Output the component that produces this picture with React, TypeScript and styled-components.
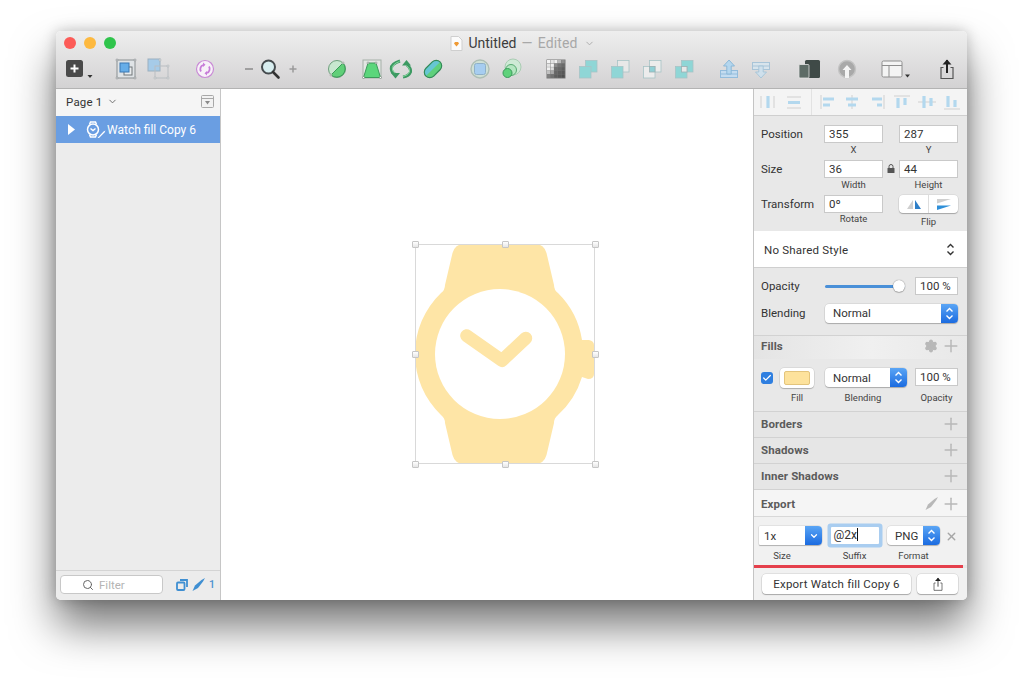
import React from 'react';
import styled, { createGlobalStyle } from 'styled-components';
import { Search, ChevronDown, Plus, X, Check, Settings } from 'lucide-react';

const GlobalStyle = createGlobalStyle`
  html, body { margin: 0; padding: 0; background: #fff; }
  body { font-family: Roboto, "Liberation Sans", sans-serif; font-size: 12px; color: #333; }
`;

const Page = styled.div`
  width: 1023px;
  height: 680px;
  padding: 31px 56px 0;
  box-sizing: border-box;
  overflow: hidden;
`;

const Window = styled.div`
  width: 911px;
  height: 569px;
  display: flex;
  flex-direction: column;
  border-radius: 5px;
  overflow: hidden;
`;

const Shadow = styled.div`
  border-radius: 5px;
  width: 911px;
  box-shadow: 0 26px 44px rgba(0, 0, 0, 0.54), 0 0 14px rgba(0, 0, 0, 0.22);
`;

const TitleArea = styled.div`
  height: 58px;
  flex: none;
  box-sizing: border-box;
  background: linear-gradient(#eeeeee, #d3d2d3);
  border-bottom: 1px solid #b3b3b3;
`;

const TitleBar = styled.div`
  display: grid;
  grid-template-columns: 1fr auto 1fr;
  align-items: center;
  height: 24px;
  padding-left: 8px;
`;

const Lights = styled.div`
  display: flex;
  gap: 8px;
`;

const Light = styled.span<{ $color: string }>`
  width: 12px;
  height: 12px;
  border-radius: 50%;
  background: ${(p) => p.$color};
`;

const Title = styled.div`
  display: flex;
  align-items: center;
  gap: 5px;
  padding-left: 14px;
  font-size: 14px;
  word-spacing: 1.5px;
  color: #3c3c3c;
`;

const Edited = styled.span`
  color: #a8a8a8;
  letter-spacing: 0.15px;
`;

const TitleChevron = styled.span`
  display: flex;
  margin-left: 1px;
`;

const Toolbar = styled.div`
  display: flex;
  align-items: center;
  height: 28px;
  padding-left: 10px;
`;

const Tool = styled.div<{ $gap: number }>`
  display: flex;
  flex: none;
  margin-left: ${(p) => p.$gap}px;
`;

const Body = styled.div`
  flex: 1;
  display: flex;
  min-height: 0;
`;

const Sidebar = styled.aside`
  width: 165px;
  flex: none;
  box-sizing: border-box;
  display: flex;
  flex-direction: column;
  background: #ececec;
  border-right: 1px solid #c6c6c6;
`;

const PageHeader = styled.div`
  height: 27px;
  box-sizing: border-box;
  display: flex;
  align-items: center;
  padding: 0 6px 2px 10px;
  background: #f5f5f5;
  color: #333;
  font-size: 11.5px;
  letter-spacing: 0.2px;
  gap: 4px;
`;

const Spacer = styled.div`
  flex: 1;
`;

const LayerRow = styled.div`
  height: 27px;
  display: flex;
  align-items: center;
  padding-left: 11px;
  background: #6a9ee2;
  color: #fff;
  font-size: 12px;
`;

const LayerArrow = styled.span`
  display: flex;
  margin-right: 9px;
`;

const LayerName = styled.span`
  margin-left: 1px;
`;

const SideFooter = styled.div`
  margin-top: auto;
  height: 30px;
  box-sizing: border-box;
  display: flex;
  align-items: center;
  padding: 0 5px 2px 4px;
  border-top: 1px solid #d4d4d4;
`;

const FilterBox = styled.div`
  width: 103px;
  height: 19px;
  box-sizing: border-box;
  border: 1px solid #c8c8c8;
  border-radius: 4px;
  background: #fff;
  display: flex;
  align-items: center;
  padding-left: 21px;
  gap: 5px;
  font-size: 11.5px;
  color: #b4b4b4;
`;

const Counter = styled.div`
  margin-left: 13px;
  display: flex;
  align-items: center;
  gap: 4px;
  color: #4a90d0;
  font-size: 10.5px;
  font-weight: 500;
`;

const Canvas = styled.main`
  flex: 1;
  position: relative;
  background: #fff;
`;

const Selection = styled.div`
  position: absolute;
  left: 194px;
  top: 155px;
  width: 180px;
  height: 220px;
  box-sizing: border-box;
`;

const Outline = styled.div`
  position: absolute;
  inset: 0;
  border: 1px solid #d9d9d9;
`;

const Handle = styled.span<{ $x: number; $y: number }>`
  position: absolute;
  left: ${(p) => p.$x}%;
  top: ${(p) => p.$y}%;
  width: 7px;
  height: 7px;
  margin: -3.5px 0 0 -3.5px;
  border: 1px solid #c6c6c6;
  border-radius: 1px;
  background: linear-gradient(#fff, #e6e6e6);
  box-sizing: border-box;
`;

const Inspector = styled.aside`
  width: 214px;
  flex: none;
  box-sizing: border-box;
  background: #e8e8e8;
  border-left: 1px solid #c4c4c4;
  display: flex;
  flex-direction: column;
  font-size: 11.5px;
`;

const AlignBar = styled.div`
  height: 27px;
  flex: none;
  box-sizing: border-box;
  display: flex;
  align-items: center;
  background: #f4f4f4;
  border-bottom: 1px solid #cfcfcf;
`;

const AlignDivider = styled.span`
  width: 1px;
  height: 26px;
  background: #e2e2e2;
  margin-left: 7px;
`;

const AlignSlot = styled.span<{ $gap: number }>`
  display: flex;
  margin-left: ${(p) => p.$gap}px;
`;

const GeometryGrid = styled.div`
  height: 115px;
  flex: none;
  box-sizing: border-box;
  padding: 9px 9px 0 7px;
  display: grid;
  grid-template-columns: 63px 59px 75px;
  grid-auto-rows: 35px;
  justify-content: start;
`;

const GeoLabel = styled.div`
  height: 18px;
  line-height: 18px;
  color: #333;
`;

const FieldStack = styled.div<{ $second?: boolean }>`
  display: flex;
  flex-direction: column;
  align-items: center;
  margin-left: ${(p) => (p.$second ? 16 : 0)}px;
  width: 59px;
`;

const Field = styled.div<{ $width?: number }>`
  width: ${(p) => p.$width ?? 59}px;
  height: 18px;
  box-sizing: border-box;
  background: #fff;
  border: 1px solid #c9c9c9;
  padding-left: 4px;
  line-height: 16px;
  color: #333;
  font-size: 11.5px;
  flex: none;
`;

const Caption = styled.div<{ $gap?: number; $inset?: number }>`
  font-size: 9.5px;
  color: #444;
  line-height: 12px;
  margin-top: ${(p) => p.$gap ?? 1}px;
  padding-right: ${(p) => p.$inset ?? 0}px;
  text-align: center;
`;

const SizeLock = styled.div`
  position: relative;
`;

const LockBadge = styled.span`
  position: absolute;
  left: -12px;
  top: 4px;
  display: flex;
`;

const FlipControl = styled.div`
  width: 59px;
  height: 18px;
  display: flex;
  background: #fff;
  border-radius: 4px;
  box-shadow: 0 1px 1px rgba(0, 0, 0, 0.25), 0 0 0 0.5px rgba(0, 0, 0, 0.1);
`;

const FlipHalf = styled.div<{ $divide?: boolean }>`
  flex: 1;
  display: flex;
  align-items: center;
  justify-content: center;
  border-left: ${(p) => (p.$divide ? '1px solid #dddddd' : 'none')};
`;

const SharedStyle = styled.div`
  height: 37px;
  flex: none;
  box-sizing: border-box;
  background: #fff;
  display: flex;
  align-items: center;
  justify-content: space-between;
  padding: 1px 12px 0 10px;
  letter-spacing: 0.2px;
  border-bottom: 1px solid #cfcfcf;
`;

const Appearance = styled.div`
  height: 67px;
  flex: none;
  box-sizing: border-box;
  padding: 9px 9px 0 7px;
  display: flex;
  flex-direction: column;
  gap: 9px;
`;

const PropRow = styled.div`
  display: flex;
  align-items: center;
  height: 18px;
`;

const PropLabel = styled.div`
  width: 64px;
  color: #333;
`;

const SliderTrack = styled.div`
  width: 80px;
  height: 3px;
  border-radius: 2px;
  background: #4a90d8;
  position: relative;
  margin-right: 10px;
`;

const SliderKnob = styled.span`
  position: absolute;
  right: 0;
  top: -4.5px;
  width: 12px;
  height: 12px;
  border-radius: 50%;
  background: #fff;
  box-shadow: 0 0 1px rgba(0, 0, 0, 0.6), 0 1px 1px rgba(0, 0, 0, 0.2);
`;

const Select = styled.div<{ $width: number; $flat?: boolean }>`
  width: ${(p) => p.$width}px;
  height: 19px;
  flex: none;
  display: flex;
  align-items: center;
  justify-content: space-between;
  background: #fff;
  border-radius: ${(p) => (p.$flat ? '1px 4px 4px 1px' : '4px')};
  box-shadow: 0 1px 1px rgba(0, 0, 0, 0.22), 0 0 0 0.5px rgba(0, 0, 0, 0.12);
  padding-left: ${(p) => (p.$flat ? 5 : 8)}px;
  box-sizing: border-box;
  overflow: hidden;
  color: #333;
  font-size: 11.5px;
`;

const Stepper = styled.span`
  width: 17px;
  height: 100%;
  display: flex;
  align-items: center;
  justify-content: center;
  background: linear-gradient(#5aa5f5, #1b6be0);
`;

const SectionHeader = styled.div<{ $light?: boolean; $height?: number }>`
  height: ${(p) => p.$height ?? 26}px;
  flex: none;
  box-sizing: border-box;
  display: flex;
  align-items: center;
  padding: ${(p) => (p.$light ? '1px 6px 0 7px' : '0 6px 2px 7px')};
  background: ${(p) =>
    p.$light ? '#f5f5f5' : 'linear-gradient(90deg, #e4e4e4, #f0f0f0 55%, #e8e8e8)'};
  border-top: 1px solid #d2d2d2;
  border-bottom: 1px solid ${(p) => (p.$light ? '#d8d8d8' : 'transparent')};
  font-weight: 700;
  color: #5b5b5b;
  font-size: 11.5px;
  letter-spacing: 0.1px;
`;

const PlainHeader = styled(SectionHeader)`
  background: #e6e6e6;
  padding: 0 6px 0 7px;
`;

const HeaderIcons = styled.div`
  margin-left: auto;
  display: flex;
  align-items: center;
  gap: 3px;
  color: #b8b8b8;
`;

const FillRow = styled.div`
  height: 52px;
  flex: none;
  box-sizing: border-box;
  padding: 9px 9px 0 7px;
  display: flex;
  align-items: flex-start;
`;

const ControlStack = styled.div<{ $width: number; $gap?: number }>`
  width: ${(p) => p.$width}px;
  height: 36px;
  margin-left: ${(p) => p.$gap ?? 0}px;
  flex: none;
  display: flex;
  flex-direction: column;
  align-items: center;
  justify-content: space-between;
`;

const CheckBox = styled.span`
  width: 12px;
  height: 12px;
  margin-top: 4px;
  flex: none;
  display: flex;
  align-items: center;
  justify-content: center;
  background: #2f7fe0;
  border-radius: 3px;
  color: #fff;
`;

const Swatch = styled.div`
  width: 34px;
  height: 20px;
  box-sizing: border-box;
  padding: 3px 4px;
  background: #fff;
  border-radius: 4px;
  box-shadow: 0 1px 1px rgba(0, 0, 0, 0.2), 0 0 0 0.5px rgba(0, 0, 0, 0.12);
`;

const SwatchColor = styled.div`
  height: 100%;
  border-radius: 2px;
  background: #fde29c;
  border: 1px solid #e3c47c;
  box-sizing: border-box;
`;

const ExportRow = styled.div`
  height: 48px;
  flex: none;
  box-sizing: border-box;
  padding: 9px 0 0 5px;
  background: #f1f1f1;
  display: flex;
  align-items: flex-start;
`;

const SuffixField = styled.div`
  width: 48px;
  height: 17px;
  margin-top: 1px;
  box-sizing: border-box;
  background: #fff;
  box-shadow: 0 0 0 3.5px #a9cdf0;
  border-radius: 1px;
  padding-left: 3px;
  line-height: 17px;
  font-size: 12px;
  color: #333;
`;

const Caret = styled.span`
  display: inline-block;
  width: 1px;
  height: 13px;
  background: #111;
  vertical-align: -2px;
`;

const RemoveIcon = styled.div`
  margin: 4px 0 0 5px;
  color: #a6a6a6;
  display: flex;
`;

const RedLine = styled.div`
  height: 3px;
  flex: none;
  margin-right: 4px;
  background: #e5404c;
`;

const ExportFooter = styled.div`
  flex: 1;
  display: flex;
  align-items: flex-start;
  gap: 6px;
  padding: 6px 0 0 8px;
  background: #f1f1f1;
`;

const Button = styled.div<{ $width: number }>`
  width: ${(p) => p.$width}px;
  height: 20px;
  display: flex;
  align-items: center;
  justify-content: center;
  background: #fff;
  border-radius: 4px;
  box-shadow: 0 1px 1px rgba(0, 0, 0, 0.25), 0 0 0 0.5px rgba(0, 0, 0, 0.14);
  color: #333;
  font-size: 11.5px;
  letter-spacing: 0.2px;
`;

const DocIcon = () => (
  <svg width="13" height="15" viewBox="0 0 13 15">
    <path d="M1 .5h7.5L12 4v10.5H1z" fill="#fbfbfb" stroke="#cfcfcf" />
    <path d="M4 7.5l1-1.5h3l1 1.5-2.5 3z" fill="#ef9a35" />
  </svg>
);

const AddTool = () => (
  <svg width="30" height="24" viewBox="0 0 30 24">
    <rect x="0" y="3" width="17" height="17" rx="2.5" fill="#4a4a4a" />
    <path d="M8.5 7.5v8M4.5 11.5h8" stroke="#fff" strokeWidth="2" />
    <path d="M21.5 18h5l-2.5 3z" fill="#333" />
  </svg>
);

const GroupTool = () => (
  <svg width="24" height="24" viewBox="0 0 24 24">
    <rect x="3" y="3" width="18" height="18" fill="#dfe3e6" stroke="#8a8f92" />
    <rect x="10" y="10" width="8" height="8" fill="#e9ecee" stroke="#717679" />
    <rect x="6" y="6" width="9" height="9" fill="#66ade8" stroke="#3b78b4" />
    <g fill="#fff" stroke="#8a8f92" strokeWidth="0.8">
      <circle cx="3" cy="3" r="1" />
      <circle cx="21" cy="3" r="1" />
      <circle cx="3" cy="21" r="1" />
      <circle cx="21" cy="21" r="1" />
    </g>
  </svg>
);

const UngroupTool = () => (
  <svg width="24" height="24" viewBox="0 0 24 24">
    <rect x="1" y="2" width="12" height="12" fill="#a6cbe8" stroke="#9cb0bf" />
    <rect x="8" y="9" width="13" height="12" fill="none" stroke="#b9bec2" />
    <g fill="#fff" stroke="#aab0b4" strokeWidth="0.8">
      <circle cx="13" cy="3" r="1" />
      <circle cx="21" cy="9" r="1" />
      <circle cx="21" cy="21" r="1" />
      <circle cx="8" cy="21" r="1" />
    </g>
  </svg>
);

const SyncTool = () => (
  <svg width="24" height="24" viewBox="0 0 24 24">
    <circle cx="12" cy="12" r="8.5" fill="#f7f1f8" stroke="#c98ad6" strokeWidth="1.2" />
    <path d="M8 14.5a4.500 4.500 0 0 1 2-6.500M16 9.500a4.500 4.500 0 0 1-2 6.500" fill="none" stroke="#c77cd8" strokeWidth="1.8" />
    <path d="M10 5.500l2.500 2.200L10 10zM14 18.500l-2.500-2.200 2.500-2.300z" fill="#c77cd8" />
  </svg>
);

const MinusTool = () => (
  <svg width="24" height="24" viewBox="0 0 24 24">
    <path d="M8 12h8" stroke="#8b8b8b" strokeWidth="1.6" />
  </svg>
);

const PlusTool = () => (
  <svg width="24" height="24" viewBox="0 0 24 24">
    <path d="M8.500 12h7M12 8.500v7" stroke="#9a9a9a" strokeWidth="1.5" />
  </svg>
);

const ZoomTool = () => (
  <svg width="24" height="24" viewBox="0 0 24 24">
    <circle cx="10.500" cy="10" r="6.500" fill="#d8eef0" stroke="#454b4e" strokeWidth="2" />
    <path d="M15 15l5.500 5.500" stroke="#333" strokeWidth="2.600" strokeLinecap="round" />
  </svg>
);

const UnionShape = () => (
  <svg width="24" height="24" viewBox="0 0 24 24">
    <circle cx="12" cy="12" r="8.500" fill="#c8e8cf" stroke="#6e9f7c" />
    <path d="M18 6a8.500 8.500 0 0 1-12 12z" fill="#60cf78" stroke="#3a9a58" />
    <g fill="#fff" stroke="#7d8a80" strokeWidth="0.6">
      <circle cx="18" cy="6" r="1" />
      <circle cx="6" cy="18" r="1" />
    </g>
  </svg>
);

const TrapezoidShape = () => (
  <svg width="24" height="24" viewBox="0 0 24 24">
    <rect x="3" y="3" width="18" height="18" fill="#e3e6e3" stroke="#a5b0a8" />
    <path d="M8 6h8l4.500 14.500h-17z" fill="#5bd67b" stroke="#3c9a5a" />
    <g fill="#fff" stroke="#7d8a80" strokeWidth="0.7">
      <circle cx="8" cy="6" r="1" />
      <circle cx="16" cy="6" r="1" />
      <circle cx="3.500" cy="20.500" r="1" />
      <circle cx="20.500" cy="20.500" r="1" />
    </g>
  </svg>
);

const RotateShape = () => (
  <svg width="24" height="24" viewBox="0 0 24 24" fill="none">
    <path d="M11 4Q1 7 2.500 13Q3 16 6 17" stroke="#3c9a62" strokeWidth="3" />
    <path d="M18 8Q22 11 21.500 15Q20 19 14 20" stroke="#3c9a62" strokeWidth="3" />
    <path d="M2 16h9l-4.500 5.500z" fill="#3c9a62" />
    <path d="M13 8.500h9L17.500 3z" fill="#3c9a62" />
    <path d="M10.500 4.500Q2 7.500 3.500 13Q4 15 6 16" stroke="#8fdda4" strokeWidth="0.9" />
    <path d="M18 9Q21 11 20.500 15Q19 18.500 14 19.500" stroke="#8fdda4" strokeWidth="0.9" />
  </svg>
);

const PillShape = () => (
  <svg width="24" height="24" viewBox="0 0 24 24">
    <g transform="rotate(-45 12 12)">
      <rect x="2" y="6.500" width="20" height="11" rx="5.500" fill="#5fd07c" />
      <path d="M2 12a5.500 5.500 0 0 1 5.500-5.500h9a5.500 5.500 0 0 1 5.500 5.500z" fill="#66c6d2" />
      <rect x="2" y="6.500" width="20" height="11" rx="5.500" fill="none" stroke="#338a58" strokeWidth="1.200" />
    </g>
  </svg>
);

const MaskTool = () => (
  <svg width="24" height="24" viewBox="0 0 24 24">
    <circle cx="12" cy="12" r="9" fill="#cfe0d6" stroke="#aebfb5" strokeWidth="1.400" />
    <rect x="6.500" y="6.500" width="11" height="11" rx="2" fill="#a6cdf0" stroke="#8fb0c8" />
  </svg>
);

const ScissorTool = () => (
  <svg width="24" height="24" viewBox="0 0 24 24">
    <circle cx="14" cy="10" r="8" fill="#cfead6" stroke="#a9ccb3" />
    <circle cx="12" cy="13" r="5.500" fill="#b5e6c1" stroke="#58aa72" />
    <circle cx="8.500" cy="16" r="4.500" fill="#5fd27b" stroke="#3b9a5b" />
  </svg>
);

const gridLevels = [
  ['#f4f4f4', '#e4e4e4', '#f0f0f0', '#b8b8b8', '#8e8e8e'],
  ['#e4e4e4', '#f2f2f2', '#8c8c8c', '#757575', '#6a6a6a'],
  ['#f0f0f0', '#dcdcdc', '#6e6e6e', '#686868', '#5e5e5e'],
  ['#c0c0c0', '#a8a8a8', '#666666', '#5e5e5e', '#585858'],
  ['#808080', '#707070', '#5e5e5e', '#585858', '#505050'],
];

const GridTool = () => (
  <svg width="24" height="24" viewBox="0 0 24 24">
    <rect x="2.500" y="2.500" width="19" height="19" fill="#777777" />
    {gridLevels.map((row, r) =>
      row.map((fill, c) => (
        <rect key={`${r}_${c}`} x={3 + c * 3.6} y={3 + r * 3.6} width="3.300" height="3.300" fill={fill} />
      ))
    )}
  </svg>
);

const BoolTool = ({ back, front, overlap }: { back: string; front: string; overlap?: string }) => (
  <svg width="24" height="24" viewBox="0 0 24 24">
    <rect x="9.500" y="3.500" width="11.500" height="11.500" fill={back} stroke="#a7c4c6" strokeWidth="0.800" />
    <rect x="3.500" y="9.500" width="11.500" height="11.500" fill={front} stroke="#a7c4c6" strokeWidth="0.800" />
    {overlap && <rect x="9.500" y="9.500" width="5.500" height="5.500" fill={overlap} stroke="#9cb0b2" strokeWidth="0.800" />}
  </svg>
);

const ForwardTool = () => (
  <svg width="24" height="24" viewBox="0 0 24 24">
    <rect x="3.500" y="13.500" width="17" height="7" fill="#c4dcf0" stroke="#93bcdc" />
    <path d="M3.500 17h17" stroke="#93bcdc" />
    <path d="M12 3l5.500 6H14.200v8H9.800V9H6.500z" fill="#b4d6ee" stroke="#86b4d6" strokeWidth="0.900" />
  </svg>
);

const BackwardTool = () => (
  <svg width="24" height="24" viewBox="0 0 24 24">
    <rect x="3.500" y="5.500" width="17" height="7" fill="#d8e4ec" stroke="#a8c4d8" />
    <path d="M3.500 9h17" stroke="#a8c4d8" />
    <path d="M12 21l5.500-6H14.200V9H9.800v6H6.500z" fill="#cfe0ec" stroke="#a4c4d8" strokeWidth="0.900" />
  </svg>
);

const MirrorTool = () => (
  <svg width="24" height="24" viewBox="0 0 24 24">
    <rect x="8" y="3" width="15" height="18" rx="1.500" fill="#3f4a47" />
    <rect x="2" y="7.500" width="10" height="13.500" rx="1" fill="#5d6b66" stroke="#e3e3e3" strokeWidth="0.800" />
  </svg>
);

const CloudTool = () => (
  <svg width="24" height="24" viewBox="0 0 24 24">
    <circle cx="12" cy="12" r="8.500" fill="#a9a9a9" stroke="#c4c4c4" strokeWidth="1.400" />
    <path d="M12 8l4.500 5H14v8h-4v-8H7.500z" fill="#f4f4f4" />
  </svg>
);

const LayoutTool = () => (
  <svg width="32" height="24" viewBox="0 0 32 24">
    <rect x="1" y="4" width="20" height="16" rx="1.500" fill="#f4f4f4" stroke="#8e8e8e" />
    <path d="M1 8.500h20M8 8.500V20" stroke="#8e8e8e" />
    <path d="M24 17.500h5l-2.500 3z" fill="#333" />
  </svg>
);

const ShareGlyph = ({ size = 24, weight = 2 }: { size?: number; weight?: number }) => (
  <svg width={size} height={size} viewBox="0 0 24 24" fill="none">
    <path d="M8.500 10.500H6v11h12v-11h-2.500" stroke="#555" strokeWidth="1.200" />
    <path d="M12 16V3" stroke="#222" strokeWidth={weight} />
    <path d="M7.500 7.500L12 2.500l4.500 5z" fill="#222" />
  </svg>
);

const WatchLayerIcon = () => (
  <svg width="21" height="18" viewBox="0 0 21 18" fill="none" stroke="#fff" strokeWidth="1.500">
    <path d="M4.500 3.500l1-2.500h5l1 2.500M4.500 13.500l1 2.500h5l1-2.500" />
    <circle cx="8" cy="8.500" r="5.500" />
    <path d="M5.500 7.500L8 9.500l2.500-2" />
    <path d="M12.500 17l6-6.500 2-1-1 2-5.500 5.500z" fill="#fff" stroke="none" />
  </svg>
);

const CollapseIcon = () => (
  <svg width="13" height="13" viewBox="0 0 13 13">
    <rect x="0.500" y="0.500" width="12" height="12" rx="1" fill="#f2f2f2" stroke="#a8a8a8" />
    <path d="M0.500 3.500h12" stroke="#a8a8a8" />
    <path d="M4 6h5L6.500 9.500z" fill="#8a8a8a" />
  </svg>
);

const CopiesIcon = () => (
  <svg width="12" height="12" viewBox="0 0 12 12" fill="none" stroke="#3f8fd2" strokeWidth="1.800">
    <rect x="1" y="3.500" width="7.500" height="7.500" rx="1" />
    <path d="M4 1h7v7" />
  </svg>
);

const PenIcon = ({ color }: { color: string }) => (
  <svg width="13" height="13" viewBox="0 0 13 13">
    <path d="M0.500 13L3 7.500 9.500 2 13 0l-2 3.500-5 6.500z" fill={color} />
  </svg>
);

const LockIcon = () => (
  <svg width="8" height="9" viewBox="0 0 8 9">
    <path d="M2 4V2.500a2 2 0 0 1 4 0V4" fill="none" stroke="#555" strokeWidth="1" />
    <rect x="0.500" y="4" width="7" height="5" rx="0.500" fill="#555" />
  </svg>
);

const StepperIcon = ({ color = '#fff' }: { color?: string }) => (
  <svg width="9" height="13" viewBox="0 0 9 13" fill="none" stroke={color} strokeWidth="1.400">
    <path d="M1.500 4.500l3-3 3 3M1.500 8.500l3 3 3-3" />
  </svg>
);

const AlignIcon = ({ guide, bars }: { guide: string; bars: string }) => (
  <svg width="20" height="16" viewBox="0 0 20 16" fill="none">
    <path d={guide} stroke="#dcdcdc" strokeWidth="1.500" />
    <path d={bars} stroke="#b3d8ee" strokeWidth="3.200" />
  </svg>
);

const alignLeft = [
  { gap: 3, guide: 'M4 2v12M17 2v12', bars: 'M11 2v12' },
  { gap: 7, guide: 'M3 3h14M3 14h14', bars: 'M4 8.500h12' },
];

const alignRight = [
  { gap: 5, guide: 'M4 1v14', bars: 'M6 5h11M6 11h7' },
  { gap: 5, guide: 'M10 1v14', bars: 'M4 5h12M6 11h8' },
  { gap: 4, guide: 'M18 1v14', bars: 'M6 5h10M11 11h5' },
  { gap: 6, guide: 'M2 2h16', bars: 'M6 4v10M13 4v7' },
  { gap: 5, guide: 'M1 8h18', bars: 'M7 2v12M14 4v8' },
  { gap: 5, guide: 'M2 15h16', bars: 'M6 2v11M13 6v7' },
];

const tools: { gap: number; icon: React.ReactNode }[] = [
  { gap: 0, icon: <AddTool /> },
  { gap: 18, icon: <GroupTool /> },
  { gap: 9, icon: <UngroupTool /> },
  { gap: 22, icon: <SyncTool /> },
  { gap: 20, icon: <MinusTool /> },
  { gap: -3, icon: <ZoomTool /> },
  { gap: -1, icon: <PlusTool /> },
  { gap: 20, icon: <UnionShape /> },
  { gap: 11, icon: <TrapezoidShape /> },
  { gap: 5, icon: <RotateShape /> },
  { gap: 8, icon: <PillShape /> },
  { gap: 23, icon: <MaskTool /> },
  { gap: 7, icon: <ScissorTool /> },
  { gap: 21, icon: <GridTool /> },
  { gap: 8, icon: <BoolTool back="#8fd6d6" front="#8fd6d6" /> },
  { gap: 8, icon: <BoolTool back="#e8e8e8" front="#8fd6d6" /> },
  { gap: 8, icon: <BoolTool back="#ececec" front="#ececec" overlap="#8fd0d6" /> },
  { gap: 8, icon: <BoolTool back="#8fd6d6" front="#8fd6d6" overlap="#e8e8e8" /> },
  { gap: 21, icon: <ForwardTool /> },
  { gap: 8, icon: <BackwardTool /> },
  { gap: 24, icon: <MirrorTool /> },
  { gap: 14, icon: <CloudTool /> },
  { gap: 22, icon: <LayoutTool /> },
  { gap: 22, icon: <ShareGlyph /> },
];

const handles = [
  [0, 0], [50, 0], [100, 0],
  [0, 50], [100, 50],
  [0, 100], [50, 100], [100, 100],
];

const Watch = () => (
  <svg width="180" height="220" viewBox="0 0 180 220">
    <path
      d="M49 0H120Q129 0 131.500 9L139 41Q139 46 143 49A84.500 84.500 0 0 1 167 96H174Q179 97 179 101V130Q179 135 173 135L167 133A84.500 84.500 0 0 1 143 171Q139 174 139 179L131.500 211Q129 220 120 220H49Q40 220 37.500 211L30 179Q30 174 26 171A84.500 84.500 0 0 1 26 49Q30 46 30 41L37.500 9Q40 0 49 0Z"
      fill="#fee5a6"
    />
    <circle cx="85" cy="110" r="65" fill="#fff" />
    <path
      d="M51.700 91.700L87 116.500L110.700 94.300"
      fill="none"
      stroke="#fee5a6"
      strokeWidth="13"
      strokeLinecap="round"
      strokeLinejoin="round"
    />
  </svg>
);

const Section = ({ name }: { name: string }) => (
  <PlainHeader>
    {name}
    <HeaderIcons>
      <Plus size={20} strokeWidth={1.8} />
    </HeaderIcons>
  </PlainHeader>
);

const App = () => (
  <Page>
    <GlobalStyle />
    <Shadow>
      <Window>
        <TitleArea>
          <TitleBar>
            <Lights>
              <Light $color="#fc5b57" />
              <Light $color="#fdb93f" />
              <Light $color="#2fc44b" />
            </Lights>
            <Title>
              <DocIcon />
              <span>
                Untitled <Edited>— Edited</Edited>
              </span>
              <TitleChevron>
                <ChevronDown size={11} color="#aaaaaa" />
              </TitleChevron>
            </Title>
          </TitleBar>
          <Toolbar>
            {tools.map((tool, i) => (
              <Tool key={i} $gap={tool.gap}>
                {tool.icon}
              </Tool>
            ))}
          </Toolbar>
        </TitleArea>
        <Body>
          <Sidebar>
            <PageHeader>
              Page 1
              <ChevronDown size={11} color="#666666" />
              <Spacer />
              <CollapseIcon />
            </PageHeader>
            <LayerRow>
              <LayerArrow>
                <svg width="9" height="13" viewBox="0 0 9 13">
                  <path d="M1 1l7 5.500-7 5.500z" fill="#fff" />
                </svg>
              </LayerArrow>
              <WatchLayerIcon />
              <LayerName>Watch fill Copy 6</LayerName>
            </LayerRow>
            <SideFooter>
              <FilterBox>
                <Search size={12} color="#666666" />
                Filter
              </FilterBox>
              <Counter>
                <CopiesIcon />
                <PenIcon color="#3f8fd2" />
                1
              </Counter>
            </SideFooter>
          </Sidebar>
          <Canvas>
            <Selection>
              <Watch />
              <Outline />
              {handles.map(([x, y]) => (
                <Handle key={`${x}_${y}`} $x={x} $y={y} />
              ))}
            </Selection>
          </Canvas>
          <Inspector>
            <AlignBar>
              {alignLeft.map((a) => (
                <AlignSlot key={a.guide} $gap={a.gap}>
                  <AlignIcon guide={a.guide} bars={a.bars} />
                </AlignSlot>
              ))}
              <AlignDivider />
              {alignRight.map((a) => (
                <AlignSlot key={a.guide} $gap={a.gap}>
                  <AlignIcon guide={a.guide} bars={a.bars} />
                </AlignSlot>
              ))}
            </AlignBar>
            <GeometryGrid>
              <GeoLabel>Position</GeoLabel>
              <FieldStack>
                <Field>355</Field>
                <Caption>X</Caption>
              </FieldStack>
              <FieldStack $second>
                <Field>287</Field>
                <Caption>Y</Caption>
              </FieldStack>
              <GeoLabel>Size</GeoLabel>
              <FieldStack>
                <Field>36</Field>
                <Caption>Width</Caption>
              </FieldStack>
              <FieldStack $second>
                <SizeLock>
                  <LockBadge>
                    <LockIcon />
                  </LockBadge>
                  <Field>44</Field>
                </SizeLock>
                <Caption>Height</Caption>
              </FieldStack>
              <GeoLabel>Transform</GeoLabel>
              <FieldStack>
                <Field>0º</Field>
                <Caption $gap={0}>Rotate</Caption>
              </FieldStack>
              <FieldStack $second>
                <FlipControl>
                  <FlipHalf>
                    <svg width="16" height="11" viewBox="0 0 16 11">
                      <path d="M7 1v9H1z" fill="#cfcfcf" />
                      <path d="M9 1v9h6z" fill="#2f7fc8" />
                    </svg>
                  </FlipHalf>
                  <FlipHalf $divide>
                    <svg width="16" height="11" viewBox="0 0 16 11">
                      <path d="M1 0h14L1 4.500z" fill="#cfcfcf" />
                      <path d="M1 6.500h14L1 11z" fill="#2f8fd8" />
                    </svg>
                  </FlipHalf>
                </FlipControl>
                <Caption $gap={3}>Flip</Caption>
              </FieldStack>
            </GeometryGrid>
            <SharedStyle>
              No Shared Style
              <StepperIcon color="#333333" />
            </SharedStyle>
            <Appearance>
              <PropRow>
                <PropLabel>Opacity</PropLabel>
                <SliderTrack>
                  <SliderKnob />
                </SliderTrack>
                <Field $width={43}>100 %</Field>
              </PropRow>
              <PropRow>
                <PropLabel>Blending</PropLabel>
                <Select $width={133}>
                  Normal
                  <Stepper>
                    <StepperIcon />
                  </Stepper>
                </Select>
              </PropRow>
            </Appearance>
            <SectionHeader $height={24}>
              Fills
              <HeaderIcons>
                <Settings size={14} fill="#b8b8b8" />
                <Plus size={20} strokeWidth={1.8} />
              </HeaderIcons>
            </SectionHeader>
            <FillRow>
              <CheckBox>
                <Check size={10} strokeWidth={3} />
              </CheckBox>
              <ControlStack $width={34} $gap={7}>
                <Swatch>
                  <SwatchColor />
                </Swatch>
                <Caption>Fill</Caption>
              </ControlStack>
              <ControlStack $width={82} $gap={11}>
                <Select $width={82}>
                  Normal
                  <Stepper>
                    <StepperIcon />
                  </Stepper>
                </Select>
                <Caption $inset={6}>Blending</Caption>
              </ControlStack>
              <ControlStack $width={43} $gap={8}>
                <Field $width={43}>100 %</Field>
                <Caption>Opacity</Caption>
              </ControlStack>
            </FillRow>
            <Section name="Borders" />
            <Section name="Shadows" />
            <Section name="Inner Shadows" />
            <SectionHeader $light $height={28}>
              Export
              <HeaderIcons>
                <PenIcon color="#b8b8b8" />
                <Plus size={20} strokeWidth={1.8} />
              </HeaderIcons>
            </SectionHeader>
            <ExportRow>
              <ControlStack $width={63}>
                <Select $width={63} $flat>
                  1x
                  <Stepper>
                    <ChevronDown size={10} color="#ffffff" strokeWidth={3} />
                  </Stepper>
                </Select>
                <Caption $inset={17}>Size</Caption>
              </ControlStack>
              <ControlStack $width={53} $gap={6}>
                <SuffixField>
                  @2x
                  <Caret />
                </SuffixField>
                <Caption>Suffix</Caption>
              </ControlStack>
              <ControlStack $width={53} $gap={6}>
                <Select $width={53}>
                  PNG
                  <Stepper>
                    <StepperIcon />
                  </Stepper>
                </Select>
                <Caption>Format</Caption>
              </ControlStack>
              <RemoveIcon>
                <X size={13} strokeWidth={2.5} />
              </RemoveIcon>
            </ExportRow>
            <RedLine />
            <ExportFooter>
              <Button $width={149}>Export Watch fill Copy 6</Button>
              <Button $width={41}>
                <ShareGlyph size={16} weight={1.2} />
              </Button>
            </ExportFooter>
          </Inspector>
        </Body>
      </Window>
    </Shadow>
  </Page>
);

export default App;
